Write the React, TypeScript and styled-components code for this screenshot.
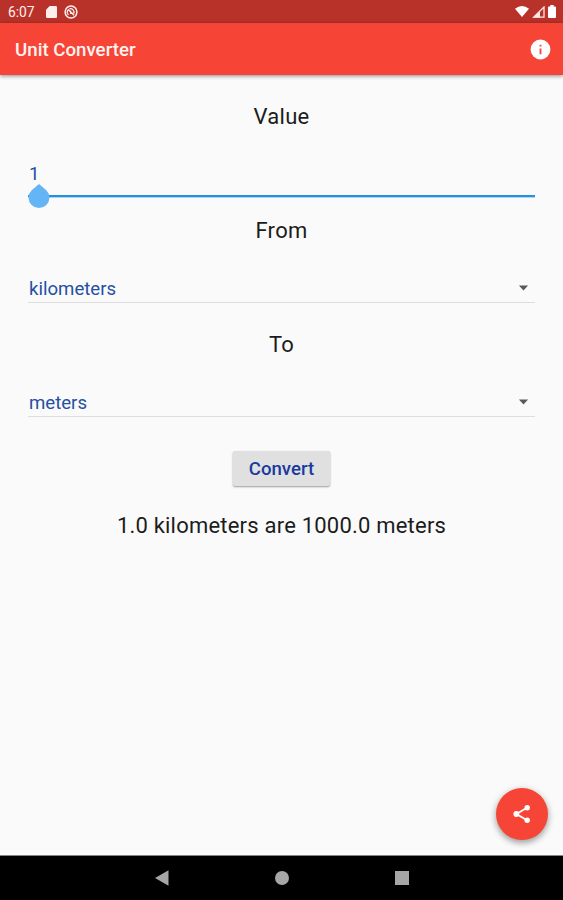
import React from 'react';
import styled, { createGlobalStyle } from 'styled-components';

const GlobalStyle = createGlobalStyle`
  * { box-sizing: border-box; }
  html, body { margin: 0; padding: 0; }
  body { font-family: Roboto, "Liberation Sans", sans-serif; background: #fafafa; overflow: hidden; }
`;

const Screen = styled.div`
  position: relative;
  display: flex;
  flex-direction: column;
  width: 563px;
  height: 900px;
  background: #fafafa;
`;

const StatusBar = styled.header`
  display: flex;
  align-items: center;
  justify-content: space-between;
  flex: none;
  height: 23px;
  padding: 0 7px 0 8px;
  background: #b93229;
  color: #fff0ee;
`;

const StatusGroup = styled.div<{ $gap: number }>`
  display: flex;
  align-items: center;
  gap: ${(p) => p.$gap}px;
  svg { display: block; }
`;

const Clock = styled.span`
  width: 31px;
  font-size: 13.8px;
  line-height: 23px;
  padding-top: 1px;
`;

const AppBar = styled.div`
  display: flex;
  align-items: center;
  justify-content: space-between;
  flex: none;
  height: 52px;
  padding: 0 12px 0 15px;
  background: #f64436;
  box-shadow: 0 1px 4px rgba(0, 0, 0, 0.45);
  z-index: 1;
`;

const Title = styled.h1`
  margin: 0;
  padding-top: 1px;
  font-size: 18.7px;
  line-height: 24px;
  font-weight: 500;
  color: #fff3f1;
`;

const IconButton = styled.button`
  display: flex;
  padding: 0;
  border: 0;
  background: none;
  color: #fff;
`;

const Form = styled.main`
  display: flex;
  flex-direction: column;
  align-items: center;
  flex: 1;
  padding: 28px 28px 0;
`;

const Label = styled.div`
  height: 28px;
  font-size: 22px;
  line-height: 28px;
  letter-spacing: 0.3px;
  color: #1c1c1c;
`;

const Field = styled.div<{ $active?: boolean }>`
  position: relative;
  display: flex;
  align-items: center;
  justify-content: space-between;
  width: 507px;
  height: ${(p) => (p.$active ? 39 : 30)}px;
  margin: ${(p) => (p.$active ? '27px 0 20px' : '28px 0 28px')};
  padding: ${(p) => (p.$active ? '0 0 7px 1px' : '0 6px 0 1px')};
  border-bottom: ${(p) => (p.$active ? '2px solid #2b8fd9' : '1px solid #dedede')};
  box-shadow: ${(p) => (p.$active ? '0 1px 0 rgba(43, 160, 230, 0.4)' : 'none')};
  color: #2450a4;
  font-size: 18.6px;
  line-height: 24px;
`;

const FieldText = styled.span`
  padding-top: 2px;
`;

const Handle = styled.svg`
  position: absolute;
  left: 0;
  top: 25px;
`;

const ConvertButton = styled.button`
  width: 97px;
  height: 35px;
  margin-top: 6px;
  padding: 1px 0 0;
  border: 0;
  border-radius: 2px;
  background: #e0e0e0;
  box-shadow: 0 1px 2px rgba(0, 0, 0, 0.38);
  color: #1a3a9f;
  font: 500 18.6px/34px Roboto, "Liberation Sans", sans-serif;
`;

const Result = styled(Label)`
  margin-top: 26px;
  letter-spacing: 0.21px;
  white-space: nowrap;
`;

const ShareButton = styled.button`
  position: absolute;
  left: 496px;
  top: 788px;
  display: flex;
  align-items: center;
  justify-content: center;
  width: 52px;
  height: 52px;
  padding: 0;
  border: 0;
  border-radius: 50%;
  background: #f64436;
  box-shadow: 0 3px 6px rgba(0, 0, 0, 0.32), 0 1px 8px rgba(0, 0, 0, 0.1);
  color: #fff;
`;

const NavBar = styled.nav`
  display: flex;
  align-items: center;
  justify-content: center;
  gap: 104px;
  flex: none;
  height: 45px;
  border-top: 1px solid #858585;
  background: #000;
  color: #a6a6a6;
`;

const Arrow = () => (
  <svg width="11" height="6" viewBox="0 0 11 6">
    <path d="M0.9 0.6H10.1L5.5 5.6Z" fill="#5a5a5a" />
  </svg>
);

const SelectField = ({ value }: { value: string }) => (
  <Field>
    <FieldText>{value}</FieldText>
    <Arrow />
  </Field>
);

export default function App() {
  return (
    <>
      <GlobalStyle />
      <Screen>
        <StatusBar>
          <StatusGroup $gap={7}>
            <Clock>6:07</Clock>
            <svg width="11" height="12" viewBox="0 0 11 12">
              <path d="M3.7 0H9.8Q11 0 11 1.2V10.8Q11 12 9.8 12H1.2Q0 12 0 10.8V3.7Z" fill="currentColor" />
            </svg>
            <svg width="14" height="14" viewBox="0 0 14 14" fill="none" stroke="currentColor">
              <circle cx="7" cy="7" r="5.9" strokeWidth="1.5" />
              <path d="M4.6 9.9A3.6 3.6 0 0 1 3.9 5.2 M5.4 3.9A3.5 3.5 0 0 1 9.7 8.6 M3.9 4.3L10 10.2 M6.6 5.6V8.4H9.2" strokeWidth="1.2" />
            </svg>
          </StatusGroup>
          <StatusGroup $gap={3}>
            <svg width="14" height="11" viewBox="0 0 14 11">
              <path d="M0 2.7Q7-2.5 14 2.7L7 11Z" fill="#fff" />
            </svg>
            <svg width="13" height="12" viewBox="0 0 13 12">
              <path d="M1.7 11.2L12 1V11.2Z" fill="none" stroke="#ffe9e6" strokeWidth="1.3" />
              <path d="M1 11.5L8 4.5V11.5Z" fill="#ffe9e6" />
            </svg>
            <svg width="8" height="13" viewBox="0 0 9 13" preserveAspectRatio="none">
              <path d="M2.6 0H6.4V1.4H8Q9 1.4 9 2.4V12Q9 13 8 13H1Q0 13 0 12V2.4Q0 1.4 1 1.4H2.6Z" fill="#fff" />
            </svg>
          </StatusGroup>
        </StatusBar>
        <AppBar>
          <Title>Unit Converter</Title>
          <IconButton aria-label="Info">
            <svg width="21" height="21" viewBox="0 0 21 21">
              <circle cx="10.5" cy="10.5" r="9.9" fill="currentColor" />
              <path d="M9.6 5.7H11.4V7.5H9.6Z M9.6 9.5H11.4V15.3H9.6Z" fill="#f64436" />
            </svg>
          </IconButton>
        </AppBar>
        <Form>
          <Label>Value</Label>
          <Field $active>
            <FieldText>1</FieldText>
            <Handle width="22" height="26" viewBox="0 0 22 26">
              <path d="M11 1L18.3 7.3A10.4 10.4 0 1 1 3.7 7.3Z" fill="#64b5f6" />
            </Handle>
          </Field>
          <Label>From</Label>
          <SelectField value="kilometers" />
          <Label>To</Label>
          <SelectField value="meters" />
          <ConvertButton>Convert</ConvertButton>
          <Result>1.0 kilometers are 1000.0 meters</Result>
        </Form>
        <ShareButton aria-label="Share">
          <svg width="20" height="20" viewBox="0 0 20 20" stroke="currentColor" fill="currentColor">
            <path d="M15 3.8L4.5 10L15 16.2" fill="none" strokeWidth="1.9" />
            <circle cx="15.2" cy="3.8" r="2.7" stroke="none" />
            <circle cx="4.3" cy="10" r="2.9" stroke="none" />
            <circle cx="15.2" cy="16.2" r="2.7" stroke="none" />
          </svg>
        </ShareButton>
        <NavBar>
          <svg width="16" height="16" viewBox="0 0 16 16">
            <path d="M1 8L14.5 0.3V15.7Z" fill="currentColor" />
          </svg>
          <svg width="16" height="16" viewBox="0 0 16 16">
            <circle cx="8" cy="8" r="7" fill="currentColor" />
          </svg>
          <svg width="16" height="16" viewBox="0 0 16 16">
            <path d="M1 1H15V15H1Z" fill="currentColor" />
          </svg>
        </NavBar>
      </Screen>
    </>
  );
}
